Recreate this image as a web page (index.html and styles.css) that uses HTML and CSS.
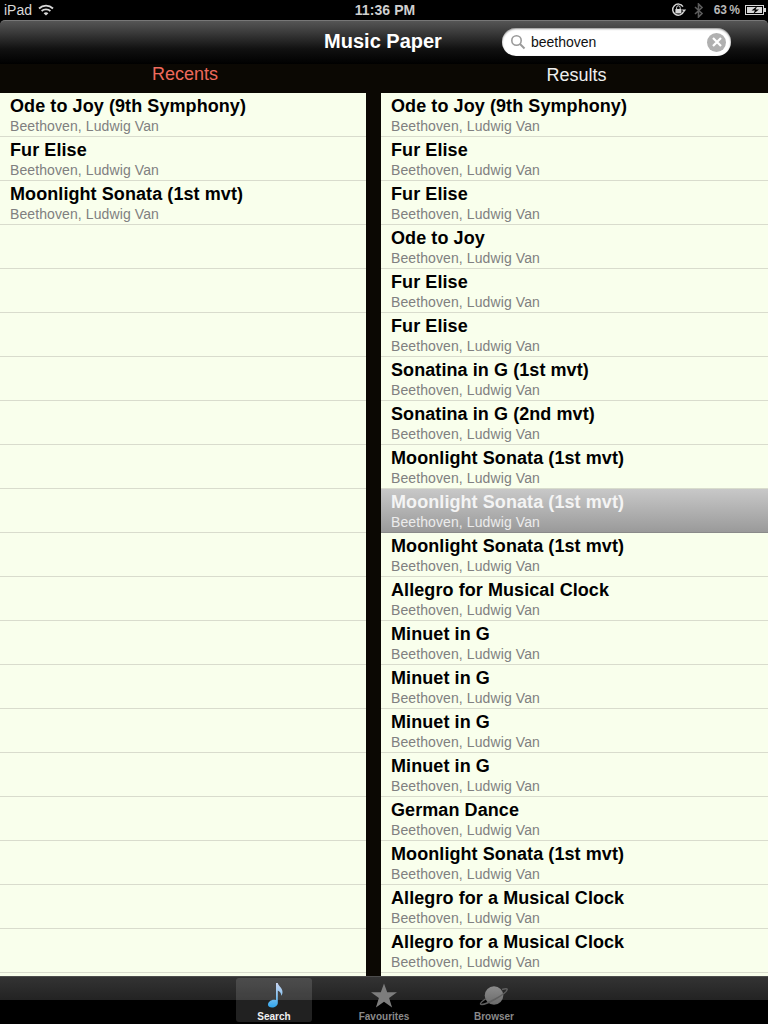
FILE: index.html
```html
<!DOCTYPE html>
<html lang="en">
<head>
    <meta charset="UTF-8">
    <meta name="viewport" content="width=device-width, initial-scale=1.0">
    <title>Music Paper</title>
    <link rel="stylesheet" href="styles.css">
</head>
<body>

<div class="app">
    <div class="status">
        <div class="status-left">
            <span>iPad</span>
            <svg class="wifi" width="16" height="12" viewBox="0 0 16 12">
                <path d="M1 4.500C5 .6 11 .6 15 4.500" fill="none" stroke="#d8d8d8" stroke-width="1.800"/>
                <path d="M3.600 7C6 4.800 10 4.800 12.400 7" fill="none" stroke="#d8d8d8" stroke-width="1.800"/>
                <path d="M8 11.500L5.600 9.200C7 8 9 8 10.400 9.200Z" fill="#d8d8d8"/>
            </svg>
        </div>
        <div class="status-time">11:36 PM</div>
        <div class="status-right">
            <svg width="16" height="14" viewBox="0 0 16 14">
                <path d="M12.600 8.500A5.600 5.600 0 1 1 12 3.600" fill="none" stroke="#d8d8d8" stroke-width="1.400"/>
                <path d="M10.800 6.600h4.400l-2.200 2.600z" fill="#d8d8d8"/>
                <rect x="4.400" y="6" width="6" height="4.400" fill="#d8d8d8"/>
                <path d="M5.600 6V4.600a1.800 1.800 0 0 1 3.600 0V6" fill="none" stroke="#d8d8d8"/>
            </svg>
            <svg class="bluetooth" width="10" height="15" viewBox="0 0 10 15">
                <path d="M1 4l7 6.500-3.500 3.500V1L8 4.500 1 11" fill="none" stroke="#5c5c5c" stroke-width="1.600"/>
            </svg>
            <span class="battery-text">63 %</span>
            <svg width="21" height="10" viewBox="0 0 21 10">
                <rect x=".5" y=".5" width="18" height="9" fill="none" stroke="#d8d8d8"/>
                <rect x="2" y="2" width="15" height="6" fill="#d8d8d8"/>
                <rect x="19" y="3" width="2" height="4" fill="#d8d8d8"/>
                <path d="M12.500 .8L6.500 5.500h3.500L8 9.200l6-4.700h-3.500z" fill="#000"/>
            </svg>
        </div>
    </div>

    <div class="toolbar">
        <h1>Music Paper</h1>
        <div class="search">
            <svg width="16" height="16" viewBox="0 0 16 16">
                <circle cx="6.500" cy="6.500" r="4.700" fill="none" stroke="#9a9a9a" stroke-width="1.600"/>
                <path d="M10 10l4.500 4.500" stroke="#9a9a9a" stroke-width="2"/>
            </svg>
            <span class="search-text">beethoven</span>
            <span class="search-clear">
                <svg width="10" height="10" viewBox="0 0 10 10">
                    <path d="M1 1l8 8M9 1l-8 8" stroke="#fff" stroke-width="2.200"/>
                </svg>
            </span>
        </div>
    </div>

    <div class="columns">
        <div class="column column-left">
            <h2 class="recents">Recents</h2>
            <div class="list">
                <div class="row"><b>Ode to Joy (9th Symphony)</b><small>Beethoven, Ludwig Van</small></div>
                <div class="row"><b>Fur Elise</b><small>Beethoven, Ludwig Van</small></div>
                <div class="row"><b>Moonlight Sonata (1st mvt)</b><small>Beethoven, Ludwig Van</small></div>
                <div class="row"></div>
                <div class="row"></div>
                <div class="row"></div>
                <div class="row"></div>
                <div class="row"></div>
                <div class="row"></div>
                <div class="row"></div>
                <div class="row"></div>
                <div class="row"></div>
                <div class="row"></div>
                <div class="row"></div>
                <div class="row"></div>
                <div class="row"></div>
                <div class="row"></div>
                <div class="row"></div>
                <div class="row"></div>
                <div class="row"></div>
                <div class="row"></div>
            </div>
        </div>
        <div class="column column-right">
            <h2 class="results">Results</h2>
            <div class="list">
                <div class="row"><b>Ode to Joy (9th Symphony)</b><small>Beethoven, Ludwig Van</small></div>
                <div class="row"><b>Fur Elise</b><small>Beethoven, Ludwig Van</small></div>
                <div class="row"><b>Fur Elise</b><small>Beethoven, Ludwig Van</small></div>
                <div class="row"><b>Ode to Joy</b><small>Beethoven, Ludwig Van</small></div>
                <div class="row"><b>Fur Elise</b><small>Beethoven, Ludwig Van</small></div>
                <div class="row"><b>Fur Elise</b><small>Beethoven, Ludwig Van</small></div>
                <div class="row"><b>Sonatina in G (1st mvt)</b><small>Beethoven, Ludwig Van</small></div>
                <div class="row"><b>Sonatina in G (2nd mvt)</b><small>Beethoven, Ludwig Van</small></div>
                <div class="row"><b>Moonlight Sonata (1st mvt)</b><small>Beethoven, Ludwig Van</small></div>
                <div class="row selected"><b>Moonlight Sonata (1st mvt)</b><small>Beethoven, Ludwig Van</small></div>
                <div class="row"><b>Moonlight Sonata (1st mvt)</b><small>Beethoven, Ludwig Van</small></div>
                <div class="row"><b>Allegro for Musical Clock</b><small>Beethoven, Ludwig Van</small></div>
                <div class="row"><b>Minuet in G</b><small>Beethoven, Ludwig Van</small></div>
                <div class="row"><b>Minuet in G</b><small>Beethoven, Ludwig Van</small></div>
                <div class="row"><b>Minuet in G</b><small>Beethoven, Ludwig Van</small></div>
                <div class="row"><b>Minuet in G</b><small>Beethoven, Ludwig Van</small></div>
                <div class="row"><b>German Dance</b><small>Beethoven, Ludwig Van</small></div>
                <div class="row"><b>Moonlight Sonata (1st mvt)</b><small>Beethoven, Ludwig Van</small></div>
                <div class="row"><b>Allegro for a Musical Clock</b><small>Beethoven, Ludwig Van</small></div>
                <div class="row"><b>Allegro for a Musical Clock</b><small>Beethoven, Ludwig Van</small></div>
                <div class="row"></div>
            </div>
        </div>
    </div>

    <div class="tabbar">
        <div class="tab active">
            <svg width="24" height="30" viewBox="0 0 24 30">
                <defs>
                    <linearGradient id="noteBlue" x1="0" y1="0" x2="0" y2="1">
                        <stop offset="0" stop-color="#c8d4f0"/>
                        <stop offset=".5" stop-color="#8cc4f0"/>
                        <stop offset="1" stop-color="#2ea6ee"/>
                    </linearGradient>
                </defs>
                <path d="M14 2h1.800c.4 3 4.700 4.700 4.700 9 0 1.600-.5 2.800-1.200 3.800 0-2.800-2-4.800-3.500-5.300V22c0 2.600-2.800 4.500-5.800 4.500-2.200 0-4-1-4-2.800 0-2.800 3-5 5.800-5 .8 0 1.500.1 2.200.4z" fill="url(#noteBlue)"/>
            </svg>
            <span>Search</span>
        </div>
        <div class="tab">
            <svg width="28" height="28" viewBox="0 0 28 28">
                <path d="M14 .5l3.200 8.800H27l-7.900 5.600 3 9.600-8.100-5.800-8.100 5.800 3-9.600L1 9.300h9.800z" fill="#7d7d7d"/>
            </svg>
            <span>Favourites</span>
        </div>
        <div class="tab">
            <svg width="30" height="28" viewBox="0 0 30 28">
                <defs>
                    <linearGradient id="planetGrey" x1="0" y1="0" x2="0" y2="1">
                        <stop offset="0" stop-color="#8c8c8c"/>
                        <stop offset="1" stop-color="#6a6a6a"/>
                    </linearGradient>
                </defs>
                <circle cx="15" cy="12.500" r="9.300" fill="url(#planetGrey)"/>
                <path d="M7 15.500C3.500 18 1 20 1.500 21c.8 1.400 7-.6 14-4.500s12.500-8.400 12.700-10c.1-1-2-1-5.200 0" fill="none" stroke="#5f5f5f" stroke-width="1.500"/>
            </svg>
            <span>Browser</span>
        </div>
    </div>
</div>

</body>
</html>
```

FILE: styles.css
```css
* {
    box-sizing: border-box;
}
html, body {
    margin: 0;
    padding: 0;
    background-color: #000;
}
body {
    font-family: "Liberation Sans", Arial, sans-serif;
}
.app {
    width: 768px;
    height: 1024px;
    overflow: hidden;
    display: flex;
    flex-direction: column;
}

/* status bar */
.status {
    height: 20px;
    flex: none;
    display: flex;
    align-items: center;
    padding: 0 2px 0 4px;
    color: #d8d8d8;
    font-size: 14px;
}
.status-left, .status-right {
    flex: 1;
    display: flex;
    align-items: center;
}
.status-left {
    gap: 6px;
}
.status-time {
    flex: none;
    font-weight: bold;
    font-size: 14px;
    letter-spacing: 0.1px;
    color: #cfcfcf;
}
.status-right {
    justify-content: flex-end;
    gap: 5px;
}
.bluetooth {
    margin: 0 5px 0 2px;
}
.battery-text {
    font-size: 12px;
    font-weight: bold;
    color: #b8b8b8;
    word-spacing: -1px;
}

/* title bar */
.toolbar {
    height: 44px;
    flex: none;
    display: flex;
    align-items: center;
    justify-content: center;
    padding-bottom: 2px;
    position: relative;
    border-radius: 5px 5px 0 0;
    border-top: 1px solid #777;
    background: linear-gradient(#555 0, #3c3c3c 25%, #111 65%, #000 100%);
}
h1 {
    margin: 0 2px 0 0;
    color: #fff;
    font-size: 20px;
    font-weight: bold;
}
.search {
    position: absolute;
    left: 502px;
    top: 7px;
    width: 229px;
    height: 28px;
    background-color: #fff;
    border-radius: 14px;
    box-shadow: inset 0 1px 2px rgba(0, 0, 0, 0.45);
    display: flex;
    align-items: center;
    padding: 0 5px 0 8px;
    gap: 5px;
    font-size: 14px;
    color: #111;
}
.search-text {
    flex: 1;
}
.search-clear {
    width: 19px;
    height: 19px;
    border-radius: 50%;
    background-color: #b0b0b0;
    display: flex;
    align-items: center;
    justify-content: center;
}

/* lists */
.columns {
    flex: 1;
    min-height: 0;
    display: flex;
    background-color: #0b0803;
}
.column {
    display: flex;
    flex-direction: column;
    min-width: 0;
}
.column-left {
    width: 366px;
    margin-right: 15px;
}
.column-right {
    flex: 1;
}
h2 {
    margin: 0;
    height: 29px;
    flex: none;
    padding-left: 4px;
    text-align: center;
    font-size: 18px;
    font-weight: normal;
    line-height: 21px;
    color: #eee;
}
h2.recents {
    color: #ee6a5c;
}
h2.results {
    line-height: 23px;
}
.list {
    flex: 1;
    overflow: hidden;
    background-color: #f9ffec;
}
.row {
    height: 44px;
    padding: 2px 10px 0;
    border-bottom: 1px solid #d9dccd;
}
.row b {
    display: block;
    font-size: 18px;
    line-height: 22px;
    letter-spacing: 0.08px;
    color: #000;
}
.row small {
    display: block;
    font-size: 14px;
    line-height: 18px;
    letter-spacing: 0.1px;
    color: #808080;
}
.row.selected {
    background: linear-gradient(#c8c8c8, #9a9a9a);
    border-bottom-color: #8a8a8a;
}
.row.selected b {
    color: #f4f4f4;
}
.row.selected small {
    color: #ececec;
}

/* tab bar */
.tabbar {
    height: 48px;
    flex: none;
    display: flex;
    justify-content: center;
    padding: 1px 0 2px;
    background: linear-gradient(#333 0, #232323 48%, #000 50%, #000 100%);
    border-top: 1px solid #4c4c4c;
}
.tab {
    width: 76px;
    margin-right: 34px;
    display: flex;
    flex-direction: column;
    align-items: center;
    justify-content: flex-end;
    border-radius: 3px;
    color: #8a8a8a;
    font-size: 10px;
    font-weight: bold;
    height: 44px;
}
.tab:last-child {
    margin-right: 0;
}
.tab svg {
    flex: none;
}
.tab.active {
    background-color: rgba(255, 255, 255, 0.13);
    color: #f0f0f0;
}
```
